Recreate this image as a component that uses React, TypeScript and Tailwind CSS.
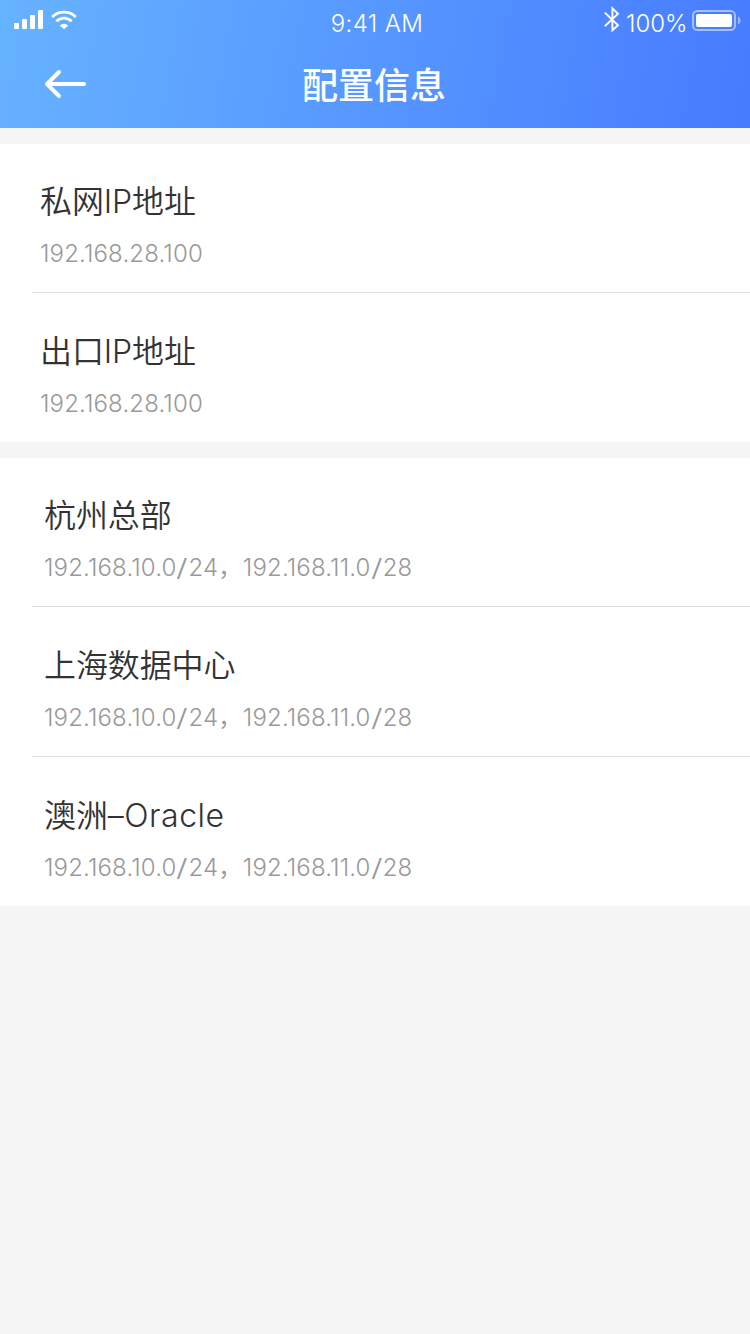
type Entry = { title: string; latin?: string; subnets: string[] };

const networkEntries: Entry[] = [
  { title: "私网IP地址", subnets: ["192.168.28.100"] },
  { title: "出口IP地址", subnets: ["192.168.28.100"] },
];

const siteSubnets = ["192.168.10.0/24", "192.168.11.0/28"];

const siteEntries: Entry[] = [
  { title: "杭州总部", subnets: siteSubnets },
  { title: "上海数据中心", subnets: siteSubnets },
  { title: "澳洲", latin: "–Oracle", subnets: siteSubnets },
];

function StatusBar() {
  return (
    <div className="grid h-10 grid-cols-3 items-start">
      <div className="flex pl-[14px] pt-[9px]">
        <svg width="66" height="22" viewBox="0 0 66 22" fill="#fff">
          <rect x="0" y="14" width="5" height="6" rx="1" />
          <rect x="8" y="10" width="5" height="10" rx="1" />
          <rect x="16" y="6" width="5" height="14" rx="1" />
          <rect x="24" y="1" width="5" height="19" rx="1" />
          <g fill="none" stroke="#fff" strokeWidth="2.9">
            <path d="M38.2 8a16.6 16.6 0 0 1 23.6 0" />
            <path d="M42.4 12.3a10.8 10.8 0 0 1 15.2 0" />
          </g>
          <path d="M50 20.2l-4.2-3.7a6.2 6.2 0 0 1 8.4 0z" />
        </svg>
      </div>
      <div className="pl-[4px] pt-[8px] text-center text-[24px] leading-[32px] font-[350] tracking-[0.4px]">
        9:41 AM
      </div>
      <div className="flex justify-end pr-[9px]">
        <svg className="mt-[6px]" width="18" height="28" viewBox="0 0 18 28" fill="none" stroke="#fff" strokeWidth="1.9">
          <path d="M.8 6.6L14 19.3l-5.6 5V2.3L14 7.8 .8 20.3" />
        </svg>
        <span className="ml-1 mt-[8px] w-[64px] text-[24px] leading-[32px] font-[350]">100%</span>
        <svg className="ml-[2px] mt-[10px]" width="49" height="22" viewBox="0 0 49 22">
          <rect x="1" y="1" width="42" height="19" rx="4.5" fill="none" stroke="#fff" strokeOpacity=".5" strokeWidth="2" />
          <rect x="4" y="4" width="36" height="13" rx="2" fill="#fff" />
          <path d="M46 6.5c3.4 1.4 3.4 6.6 0 8z" fill="#fff" fillOpacity=".5" />
        </svg>
      </div>
    </div>
  );
}

function Header() {
  return (
    <header className="h-32 bg-[linear-gradient(100deg,#66b3ff_0%,#477bff_100%)] text-white">
      <StatusBar />
      <div className="grid h-[88px] grid-cols-3 items-center">
        <button className="ml-11 w-fit" aria-label="返回">
          <svg width="44" height="30" viewBox="0 0 44 30" fill="none" stroke="#fff" strokeWidth="4" strokeLinecap="round" strokeLinejoin="round">
            <path d="M15 3L3 15l12 12M4 15h36" />
          </svg>
        </button>
        <h1 className="pt-[3px] pr-[2px] text-center text-[36px] leading-[50px] font-medium">配置信息</h1>
      </div>
    </header>
  );
}

function Subnet({ value }: { value: string }) {
  const [address, mask] = value.split("/");
  return (
    <span>
      {address}
      {mask && <span className="inline-block scale-x-140 px-[1.8px]">/</span>}
      {mask}
    </span>
  );
}

function Section({ entries, inset }: { entries: Entry[]; inset: string }) {
  return (
    <section className="mt-4 bg-white">
      {entries.map((entry, i) => (
        <div key={entry.title}>
          {i > 0 && <div className="ml-8 h-[2px] border-t border-[#dedede]" />}
          <div className={`flex h-[148px] flex-col pt-[35px] ${inset}`}>
            <h2 className="text-[32px] leading-[46px] font-[350] tracking-[-0.1px] text-[#333]">
              {entry.title}
              {entry.latin && <span className="tracking-[0.5px]">{entry.latin}</span>}
            </h2>
            <p className="mt-[12px] flex text-[24px] leading-[34px] font-[350] tracking-[0.15px] text-[#999]">
              {entry.subnets.map((subnet, n) => (
                <span key={subnet} className="flex">
                  {n > 0 && <span className="w-[24.5px]">，</span>}
                  <Subnet value={subnet} />
                </span>
              ))}
            </p>
          </div>
        </div>
      ))}
    </section>
  );
}

export default function App() {
  return (
    <main className="h-[1334px] w-[750px] overflow-hidden bg-[#f5f5f5] font-['Inter','Noto_Sans_CJK_SC',sans-serif]">
      <Header />
      <Section entries={networkEntries} inset="pl-10" />
      <Section entries={siteEntries} inset="pl-11" />
    </main>
  );
}
